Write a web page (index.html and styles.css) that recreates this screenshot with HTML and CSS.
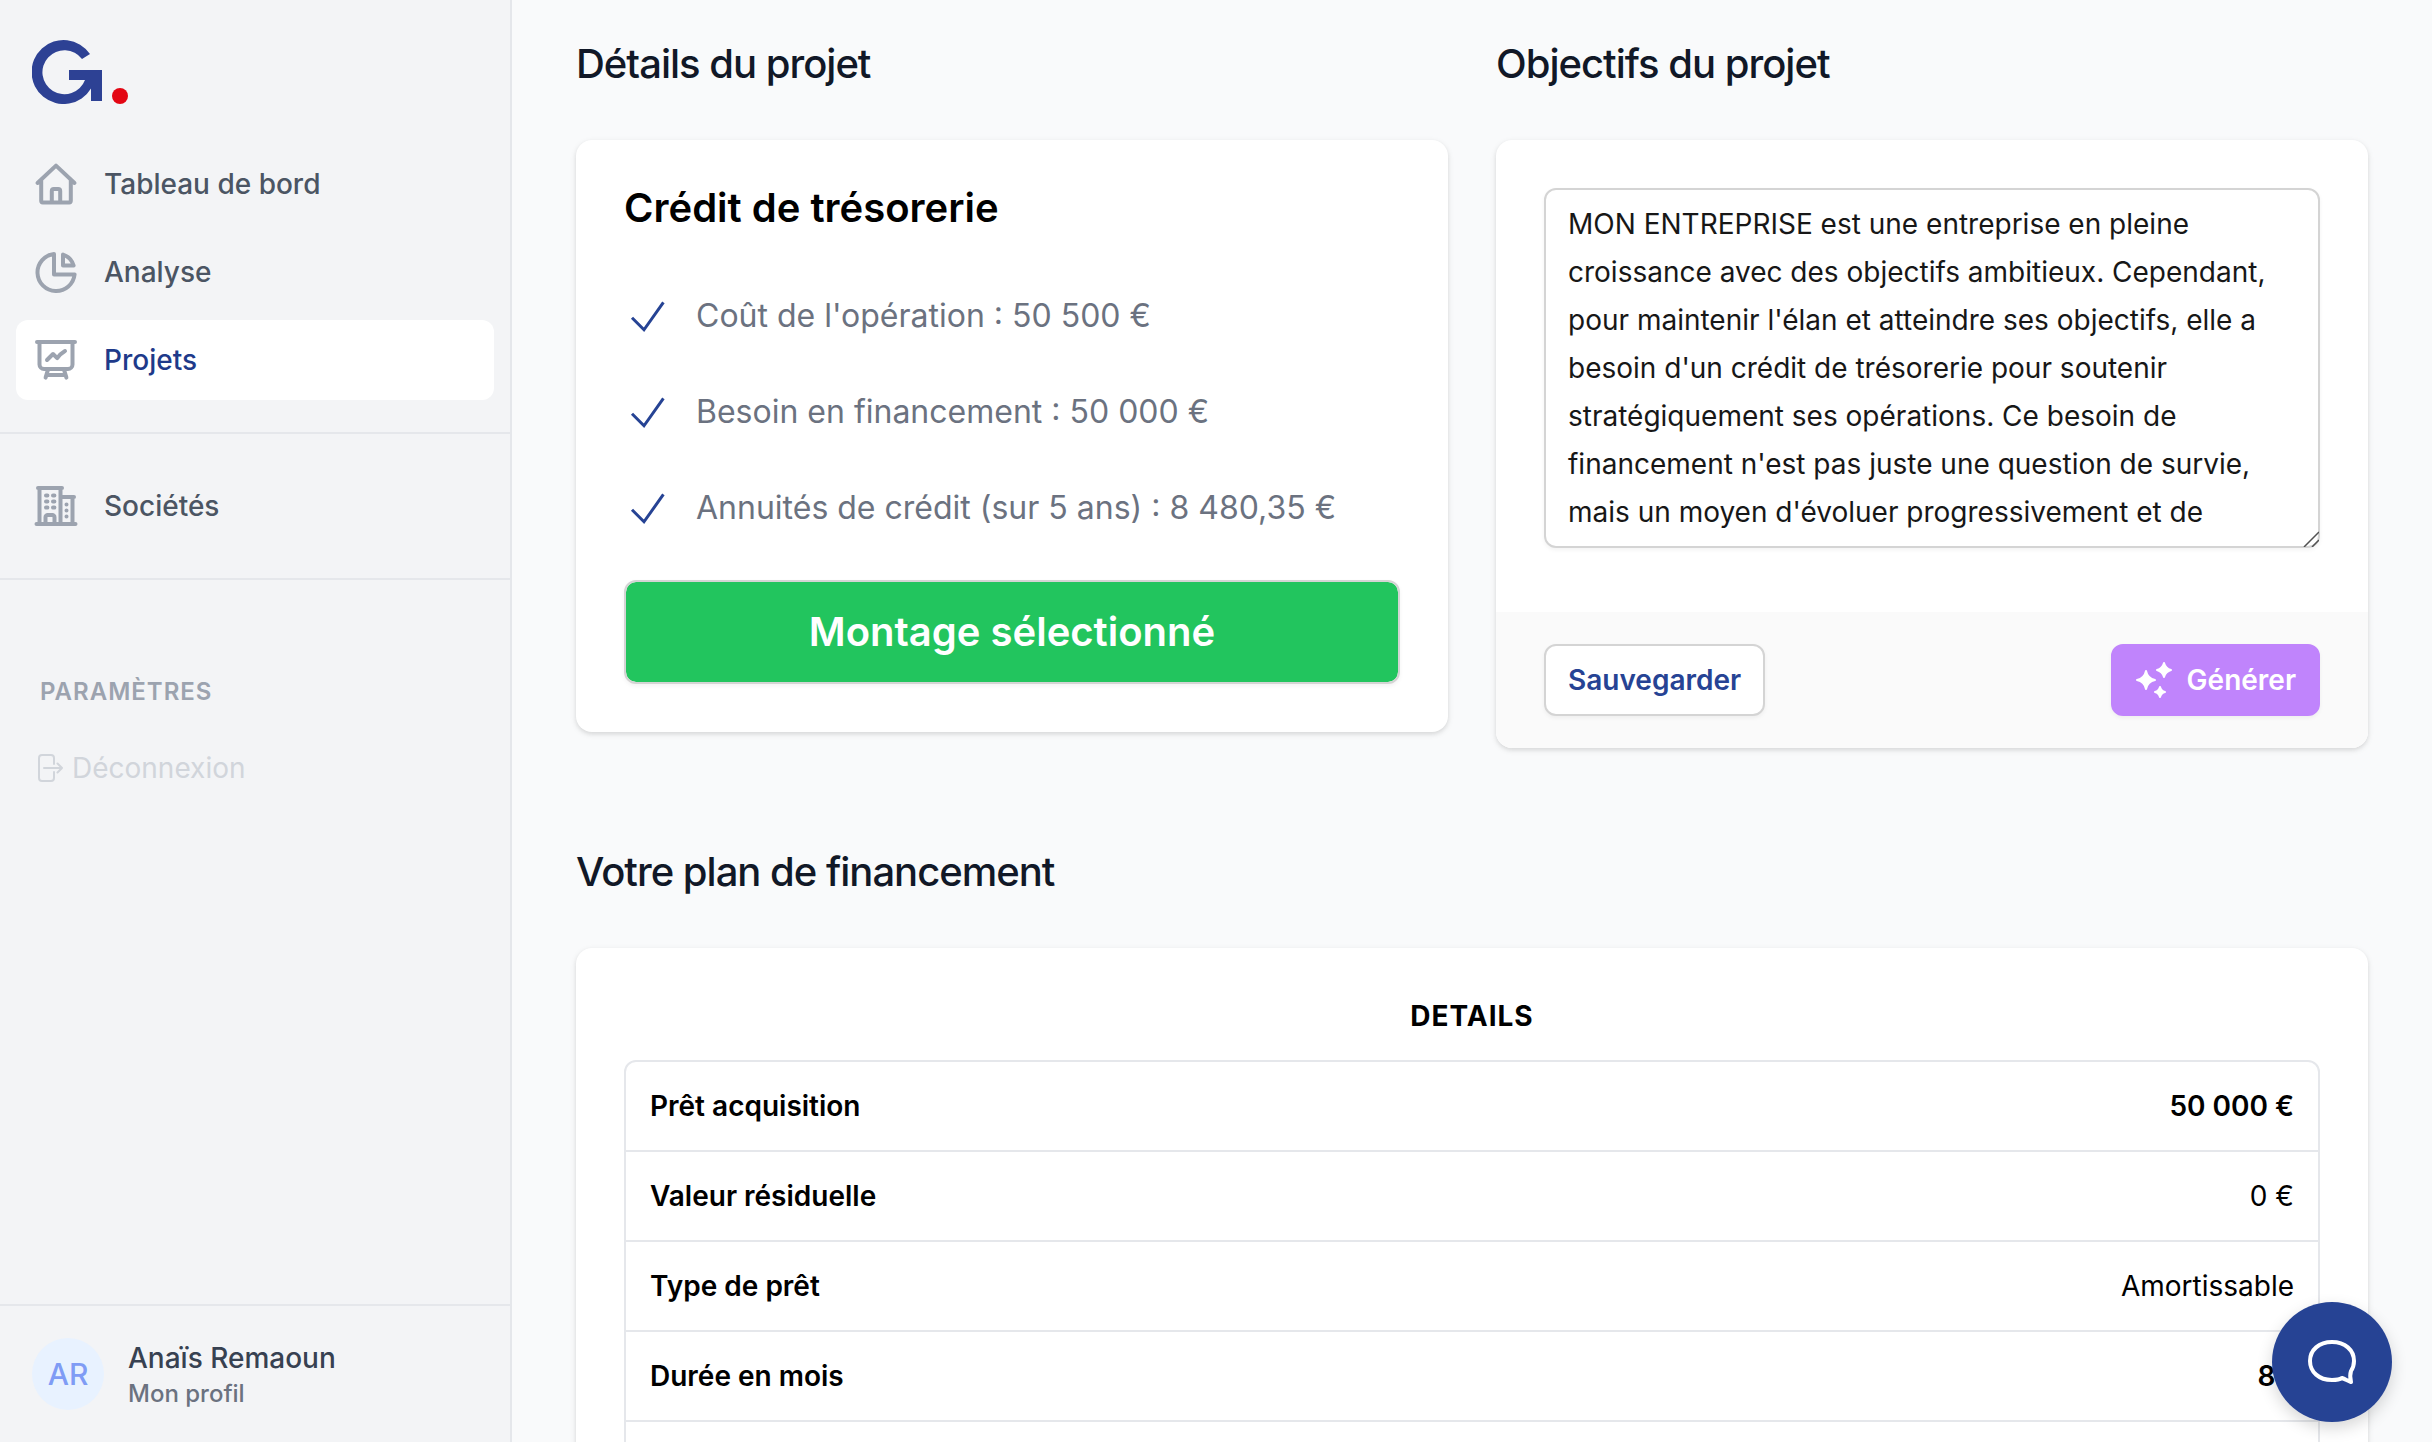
FILE: index.html
```html
<!DOCTYPE html>
<html lang="fr">
<head>
<meta charset="utf-8">
<meta name="viewport" content="width=device-width, initial-scale=1">
<title>Projets</title>
<link rel="stylesheet" href="styles.css">
</head>
<body>
<div class="app">
  <aside class="sidebar">
    <a class="logo" href="#" aria-label="Accueil">
      <svg width="96" height="64" viewBox="0 0 96 64">
        <path d="M58 14A32 32 0 1 0 59 48.500V61H70V30H37V40H53A22 22 0 1 1 50 19Z" fill="#2d4194"/>
        <circle cx="88" cy="56" r="8" fill="#e30613"/>
      </svg>
    </a>
    <nav class="nav">
      <div class="nav-group">
        <a class="nav-item" href="#">
          <svg class="icon" viewBox="0 0 24 24"><path d="M2.750 11.500 12 2.800l9.250 8.700M4.600 10v10.400c0 .4.300.8.800.8h13.200c.5 0 .8-.4.8-.8V10M9.900 21v-5.500c0-.6.400-1 1-1h2.200c.6 0 1 .4 1 1V21"/></svg>
          Tableau de bord
        </a>
        <a class="nav-item" href="#">
          <svg class="icon" viewBox="0 0 24 24"><path d="M11 3a9.300 9.300 0 1 0 10.300 10.200H11ZM15.500 3.300a8 8 0 0 1 5.300 5.500h-5.300Z"/></svg>
          Analyse
        </a>
        <a class="nav-item active" href="#" aria-current="page">
          <svg class="icon" viewBox="0 0 24 24"><path d="M2.500 3h19M3.750 3v11.250A2.250 2.250 0 0 0 6 16.500h12a2.250 2.250 0 0 0 2.250-2.250V3M8 16.800l-1.200 4M16 16.800l1.200 4M7.500 19.500h9M7.500 12l3-3 2.100 2.100a12 12 0 0 1 3.900-3.600"/></svg>
          Projets
        </a>
      </div>
      <div class="nav-group">
        <a class="nav-item" href="#">
          <svg class="icon" viewBox="0 0 24 24"><path d="M2.250 21h19.500M3.750 21V3M14.250 3v18M20.250 7.500V21M3 3h12M15 7.500h6M6.750 21v-3.400a1.100 1.100 0 0 1 1.100-1.100h2.300a1.100 1.100 0 0 1 1.100 1.100V21M7 6.750h.7M7 9.750h.7M7 12.750h.7M10.500 6.750h.7M10.500 9.750h.7M10.500 12.750h.7M17.250 11.250h.01M17.250 14.250h.01M17.250 17.250h.01"/></svg>
          Sociétés
        </a>
      </div>
    </nav>
    <div class="settings">
      <h2 class="settings-title">PARAMÈTRES</h2>
      <button class="logout" type="button">
        <svg class="logout-icon" viewBox="0 0 28 28"><path d="M18 10V4a3 3 0 0 0-3-3H6a3 3 0 0 0-3 3v20a3 3 0 0 0 3 3h9a3 3 0 0 0 3-3v-6M8 14h18M21.500 9.500 26 14l-4.500 4.500"/></svg>
        Déconnexion
      </button>
    </div>
    <a class="profile" href="#">
      <span class="avatar">AR</span>
      <span class="profile-text">
        <span class="profile-name">Anaïs Remaoun</span>
        <span class="profile-link">Mon profil</span>
      </span>
    </a>
  </aside>

  <main class="main">
    <div class="columns">
      <section class="section">
        <h2 class="section-title">Détails du projet</h2>
        <div class="card padded">
          <h3 class="card-title">Crédit de trésorerie</h3>
          <ul class="features">
            <li class="feature"><svg class="check" viewBox="0 0 24 24"><path d="m4 12.900 6 6 9.700-13.700"/></svg>Coût de l'opération : 50 500 €</li>
            <li class="feature"><svg class="check" viewBox="0 0 24 24"><path d="m4 12.900 6 6 9.700-13.700"/></svg>Besoin en financement : 50 000 €</li>
            <li class="feature"><svg class="check" viewBox="0 0 24 24"><path d="m4 12.900 6 6 9.700-13.700"/></svg>Annuités de crédit (sur 5 ans) : 8 480,35 €</li>
          </ul>
          <button class="btn-selected" type="button">Montage sélectionné</button>
        </div>
      </section>
      <section class="section">
        <h2 class="section-title" id="goals">Objectifs du projet</h2>
        <div class="card">
          <div class="goals-body">
            <div class="field">
              <textarea class="textarea" aria-labelledby="goals">MON ENTREPRISE est une entreprise en pleine croissance avec des objectifs ambitieux. Cependant, pour maintenir l'élan et atteindre ses objectifs, elle a besoin d'un crédit de trésorerie pour soutenir stratégiquement ses opérations. Ce besoin de financement n'est pas juste une question de survie, mais un moyen d'évoluer progressivement et de</textarea>
              <svg class="grip" viewBox="0 0 16 16"><path d="M1 16 16 1M9 16l7-7"/></svg>
            </div>
          </div>
          <div class="card-footer">
            <button class="btn btn-save" type="button">Sauvegarder</button>
            <button class="btn btn-generate" type="button">
              <svg class="sparkles" viewBox="0 0 40 40"><path d="M11 11q1.500 7.500 9 9-7.500 1.500-9 9-1.500-7.500-9-9 7.500-1.500 9-9ZM29 3q1.500 5.500 7 7-5.500 1.500-7 7-1.500-5.500-7-7 5.500-1.500 7-7ZM25 27q1 4 5 5-4 1-5 5-1-4-5-5 4-1 5-5Z"/></svg>
              Générer
            </button>
          </div>
        </div>
      </section>
    </div>

    <section class="section">
      <h2 class="section-title">Votre plan de financement</h2>
      <div class="card padded">
        <h3 class="table-title" id="details">DETAILS</h3>
        <div class="table-frame">
          <table class="table" aria-labelledby="details">
            <tbody>
              <tr><th scope="row">Prêt acquisition</th><td class="strong">50 000 €</td></tr>
              <tr><th scope="row">Valeur résiduelle</th><td>0 €</td></tr>
              <tr><th scope="row">Type de prêt</th><td>Amortissable</td></tr>
              <tr><th scope="row">Durée en mois</th><td class="strong">84</td></tr>
              <tr><td></td><td></td></tr>
            </tbody>
          </table>
        </div>
      </div>
    </section>
  </main>
</div>
<button class="chat" type="button" aria-label="Chat">
  <svg width="48" height="48" viewBox="0 0 48 48"><path d="M24 4C11 4 2 12 2 23s9 19 22 19c4 0 7 0 10-2 3 1 6 3 9 4-1-4-1-8 0-11 2-3 3-6 3-10C46 12 37 4 24 4Z"/></svg>
</button>
</body>
</html>
```
FILE: styles.css
```css
* {
  box-sizing: border-box;
  margin: 0;
}

body {
  font-family: Inter, "Liberation Sans", sans-serif;
  font-size: 28px;
  line-height: 40px;
  color: #000;
  background: #f9fafb;
}

a {
  color: inherit;
  text-decoration: none;
}

button,
textarea {
  font: inherit;
}

h2,
h3 {
  font-size: inherit;
}

.app {
  display: flex;
  height: 100vh;
}

/* Sidebar */

.sidebar {
  display: flex;
  flex-direction: column;
  flex: 0 0 512px;
  background: #f3f4f6;
  border-right: 2px solid #e5e7eb;
}

.logo {
  display: flex;
  padding: 40px 32px;
}

.nav-group {
  display: flex;
  flex-direction: column;
  gap: 8px;
  padding: 32px 16px;
  border-bottom: 2px solid #e5e7eb;
}

.nav-group:first-child {
  padding-top: 0;
}

.nav-item {
  display: flex;
  align-items: center;
  gap: 24px;
  height: 80px;
  padding: 0 16px;
  border-radius: 12px;
  font-weight: 500;
  color: #4b5563;
}

.nav-item.active {
  background: #fff;
  color: #1e3a8a;
}

.icon {
  width: 48px;
  height: 48px;
  fill: none;
  stroke: #9ca3af;
  stroke-width: 2;
  stroke-linecap: round;
  stroke-linejoin: round;
}

.settings {
  flex: 1;
  padding: 96px 36px 0;
}

.settings-title {
  padding: 0 4px;
  font-size: 24px;
  line-height: 32px;
  font-weight: 600;
  letter-spacing: 1px;
  color: #9ca3af;
}

.logout {
  display: flex;
  align-items: center;
  gap: 8px;
  margin-top: 40px;
  padding: 0;
  border: 0;
  background: none;
  color: #d1d5db;
}

.logout-icon {
  width: 28px;
  height: 28px;
  fill: none;
  stroke: currentColor;
  stroke-width: 2;
  stroke-linecap: round;
  stroke-linejoin: round;
}

.profile {
  display: flex;
  align-items: center;
  gap: 24px;
  padding: 32px;
  border-top: 2px solid #e5e7eb;
  font-weight: 500;
}

.avatar {
  display: grid;
  place-items: center;
  width: 72px;
  height: 72px;
  border-radius: 50%;
  background: #e8f2ff;
  color: #7f9cf5;
  font-size: 30px;
}

.profile-text {
  display: flex;
  flex-direction: column;
}

.profile-name {
  color: #374151;
}

.profile-link {
  font-size: 24px;
  line-height: 32px;
  color: #6b7280;
}

/* Content */

.main {
  display: flex;
  flex-direction: column;
  flex: 1;
  min-width: 0;
  gap: 96px;
  padding: 36px 64px;
  overflow-y: auto;
  scrollbar-width: none;
}

.columns {
  display: grid;
  grid-template-columns: 1fr 1fr;
  align-items: start;
  gap: 48px;
}

.section {
  display: flex;
  flex-direction: column;
  gap: 48px;
}

.section-title {
  font-size: 40px;
  line-height: 56px;
  font-weight: 500;
  letter-spacing: -1px;
  color: #111827;
}

.card {
  border-radius: 16px;
  background: #fff;
  box-shadow: 0 2px 6px rgba(0, 0, 0, 0.1), 0 2px 4px rgba(0, 0, 0, 0.06);
}

.padded {
  padding: 48px;
}

.card-title {
  font-size: 40px;
  line-height: 40px;
  font-weight: 600;
}

.features {
  margin: 40px 0 24px;
  padding: 0;
  list-style: none;
}

.feature {
  display: flex;
  align-items: center;
  gap: 24px;
  padding: 24px 0;
  font-size: 32px;
  line-height: 48px;
  color: #6b7280;
}

.check {
  width: 48px;
  height: 48px;
  fill: none;
  stroke: #264394;
  stroke-width: 1.5;
}

.btn-selected {
  width: 100%;
  height: 104px;
  border: 2px solid #d4d4d4;
  border-radius: 12px;
  background: #22c55e;
  background-clip: padding-box;
  box-shadow: 0 2px 4px rgba(0, 0, 0, 0.05);
  font-size: 40px;
  font-weight: 600;
  color: #fff;
}

.goals-body {
  padding: 48px 48px 64px;
}

.field {
  position: relative;
}

.textarea {
  display: block;
  width: 100%;
  height: 360px;
  padding: 10px 22px;
  border: 2px solid #d4d4d4;
  border-radius: 12px;
  background: #fff;
  box-shadow: 0 2px 4px rgba(0, 0, 0, 0.05);
  line-height: 48px;
  color: #171717;
  resize: none;
  scrollbar-width: none;
}

.grip {
  position: absolute;
  right: 1px;
  bottom: 1px;
  width: 16px;
  height: 16px;
  fill: none;
  stroke: #525252;
  stroke-width: 1.5;
}

.card-footer {
  display: flex;
  justify-content: space-between;
  padding: 32px 48px;
  border-radius: 0 0 16px 16px;
  background: #fafafa;
}

.btn {
  display: flex;
  align-items: center;
  height: 72px;
  padding: 0 22px;
  border: 2px solid #d4d4d4;
  border-radius: 12px;
  box-shadow: 0 2px 4px rgba(0, 0, 0, 0.05);
  font-weight: 600;
}

.btn-save {
  background: #fff;
  color: #264394;
}

.btn-generate {
  gap: 12px;
  border-color: #c084fc;
  background: #c084fc;
  color: #fff;
}

.sparkles {
  width: 40px;
  height: 40px;
  fill: currentColor;
  stroke: currentColor;
  stroke-width: 2;
  stroke-linejoin: round;
}

.table-title {
  margin-bottom: 24px;
  font-weight: 700;
  letter-spacing: 1px;
  text-align: center;
}

.table-frame {
  border: 2px solid #e5e7eb;
  border-radius: 12px;
}

.table {
  width: 100%;
  border-collapse: separate;
  border-spacing: 0;
}

.table th,
.table td {
  height: 90px;
  padding: 0 24px;
  border-bottom: 2px solid #e5e7eb;
  font-weight: 400;
  text-align: right;
}

.table tr:last-child td {
  border-bottom: 0;
}

.table th {
  font-weight: 600;
  text-align: left;
}

.table .strong {
  font-weight: 600;
}

.chat {
  position: fixed;
  right: 40px;
  bottom: 20px;
  display: grid;
  place-items: center;
  width: 120px;
  height: 120px;
  padding: 0;
  border: 0;
  border-radius: 50%;
  background: #264394;
  box-shadow: 0 6px 16px rgba(0, 0, 0, 0.16);
}

.chat svg {
  fill: none;
  stroke: #fff;
  stroke-width: 4;
  stroke-linejoin: round;
}
```
